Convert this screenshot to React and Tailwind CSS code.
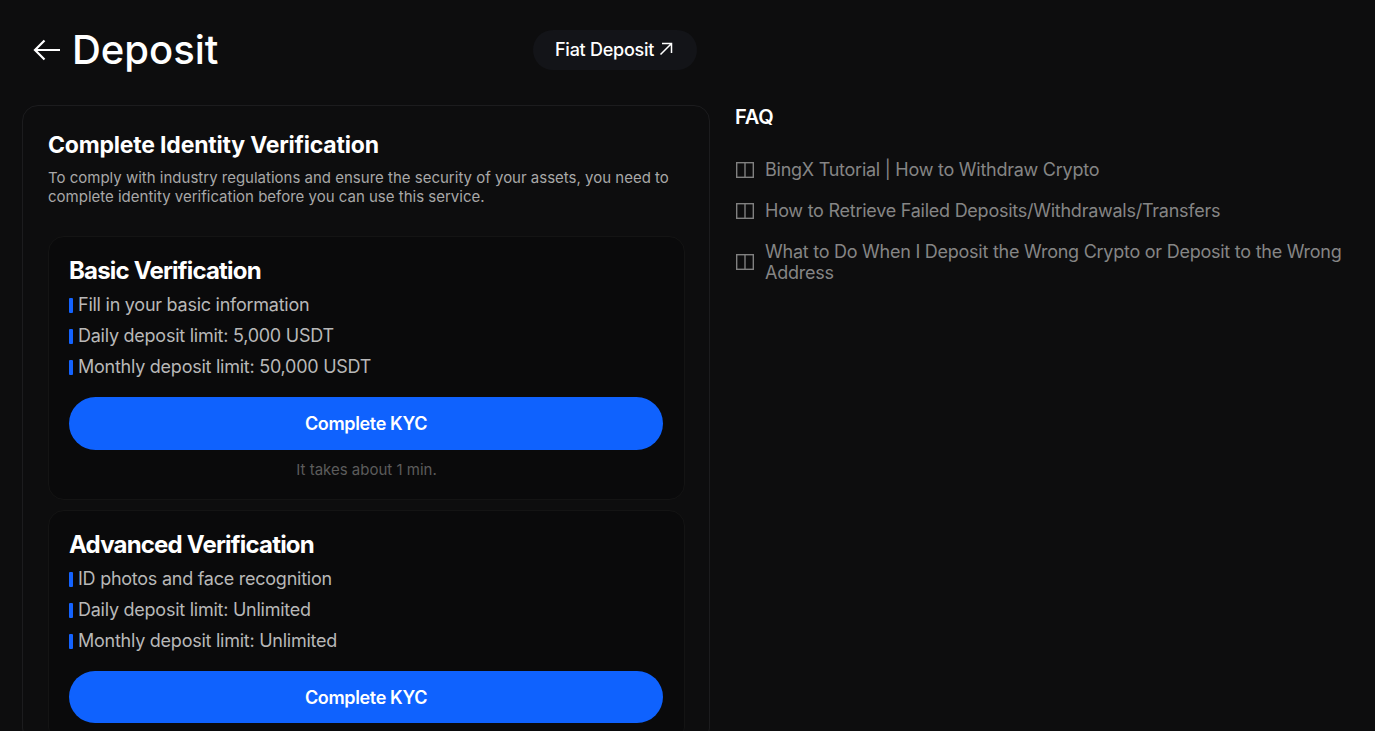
function Tier({ title, items, note, short }) {
  return (
    <div className="w-[637px] rounded-[16px] border border-[#141414] bg-[#0a0a0b] px-5 pt-[16px] pb-[19px]">
      <h3 className="text-[24px] leading-[36px] font-bold text-white tracking-[-0.8px]">{title}</h3>
      <ul className="mt-[4px] flex flex-col gap-[7px]">
        {items.map((t) => (
          <li key={t} className="flex items-center gap-[5px] text-[18px] leading-[24px] tracking-[-0.25px] text-[#b8b8b8]">
            <span className="h-[15px] w-[4px] shrink-0 rounded-[1px] bg-[#1463ff]" />
            {t}
          </li>
        ))}
      </ul>
      <button className={short ? "mt-[18px] h-[52px] w-[594px] rounded-full bg-[#0f62fe] text-[18px] font-semibold tracking-[-0.35px] text-white" : "mt-[18px] h-[53px] w-[594px] rounded-full bg-[#0f62fe] text-[18px] font-semibold tracking-[-0.35px] text-white"}>Complete KYC</button>
      {note && <p className="mt-[10px] text-center text-[15px] leading-[20px] text-[#5c5c5c]">{note}</p>}
    </div>
  );
}
function Book() {
  return (
    <svg width="18" height="16" viewBox="0 0 18 16" fill="none" stroke="#808080" strokeWidth="1.4" className="ml-px shrink-0">
      <rect x="0.7" y="0.7" width="16.6" height="14.6" />
      <path d="M9 0.7V15.3" />
    </svg>
  );
}
export default function App() {
  return (
    <div className="flex h-[731px] overflow-hidden bg-[#0d0d0e] font-['Inter',sans-serif]">
      <div className="ml-[22px] w-[688px] shrink-0">
        <header className="flex h-[105px] items-start">
          <div className="ml-[11px] mt-[24px] flex h-[52px] w-[186px] items-center">
            <svg width="28" height="24" viewBox="0 0 28 24" fill="none" stroke="#fff" strokeWidth="2.200" className="mr-[11px]">
              <path d="M27 12H2M11.500 2.500 2 12l9.500 9.500" />
            </svg>
            <h1 className="text-[40px] leading-[52px] font-medium text-white">Deposit</h1>
          </div>
          <a className="ml-[314px] mt-[30px] flex h-[40px] w-[164px] items-center gap-[5px] rounded-full bg-[#131418] pb-[2px] pl-[22px] text-[18px] font-medium tracking-[-0.25px] text-white">
            Fiat Deposit
            <svg width="14" height="14" viewBox="0 0 14 14" fill="none" stroke="#fff" strokeWidth="1.500"><path d="M1.500 12.500 12.500 1.500M3 1.500h9.500V11" /></svg>
          </a>
        </header>
        <section className="rounded-[16px] border border-[#1c1c1e] bg-[#0d0d0e] pl-[25px] pt-[22px]">
          <h2 className="text-[23px] leading-[34px] font-bold text-white tracking-[-0.2px]">Complete Identity Verification</h2>
          <p className="mt-[6px] w-[630px] text-[15px] leading-[19px] text-[#a8a8a8]">To comply with industry regulations and ensure the security of your assets, you need to complete identity verification before you can use this service.</p>
          <div className="mt-[30px] flex flex-col gap-[10px]">
            <Tier title="Basic Verification" note="It takes about 1 min." items={["Fill in your basic information", "Daily deposit limit: 5,000 USDT", "Monthly deposit limit: 50,000 USDT"]} />
            <Tier short title="Advanced Verification" items={["ID photos and face recognition", "Daily deposit limit: Unlimited", "Monthly deposit limit: Unlimited"]} />
          </div>
        </section>
      </div>
      <aside className="ml-[25px] mt-[105px] w-[615px]">
        <h2 className="text-[20px] leading-[24px] font-semibold tracking-[-0.2px] text-white">FAQ</h2>
        <ul className="mt-[30px] flex flex-col gap-[20px]">
          {["BingX Tutorial | How to Withdraw Crypto", "How to Retrieve Failed Deposits/Withdrawals/Transfers", "What to Do When I Deposit the Wrong Crypto or Deposit to the Wrong Address"].map((t) => (
            <li key={t} className="flex items-center gap-[11px] text-[18px] leading-[21px] tracking-[-0.25px] text-[#858585]"><Book />{t}</li>
          ))}
        </ul>
      </aside>
    </div>
  );
}
